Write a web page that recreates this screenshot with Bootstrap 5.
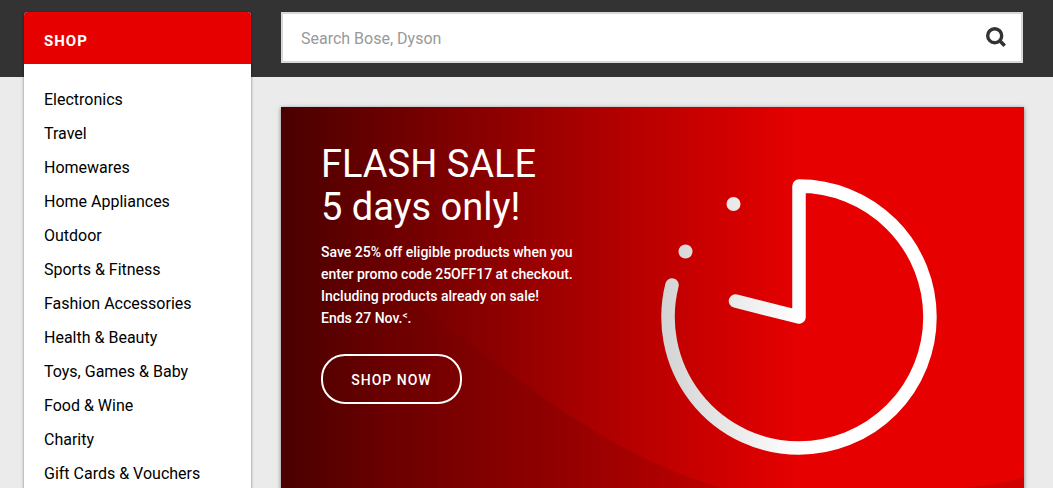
<!DOCTYPE html>
<html lang="en">
<head>
<meta charset="utf-8">
<meta name="viewport" content="width=device-width, initial-scale=1">
<title>Shop</title>
<link href="https://cdn.jsdelivr.net/npm/bootstrap@5.3.0/dist/css/bootstrap.min.css" rel="stylesheet">
<style>
  body {
    font-family: Roboto, "Liberation Sans", sans-serif;
    color: #000;
    background: linear-gradient(#333 77px, #ebebeb 77px) no-repeat #ebebeb;
  }
  .shop-page { gap: 30px; padding: 12px 29px 0 24px; }
  .shop-menu {
    width: 227px;
    border-radius: 4px 4px 0 0;
    box-shadow: 0 1px 3px rgba(0, 0, 0, .5);
  }
  .shop-title {
    height: 52px;
    padding: 6px 20px 0;
    font-size: 15px;
    letter-spacing: 1px;
    background: #e60000;
    border-radius: 4px 4px 0 0;
  }
  .shop-links { padding: 19px 20px 0; }
  .shop-links a {
    display: block;
    font-size: 16px;
    line-height: 34px;
    color: #000;
    text-decoration: none;
    white-space: nowrap;
  }
  .shop-search { height: 51px; margin-right: 1px; border: 2px solid #d8d8d8; }
  .shop-search input { padding: 2px 18px 0; font-size: 16px; color: #333; }
  .shop-search input::placeholder { color: #999; }
  .shop-search button { padding: 0 15px 2px; line-height: 1; }
  .promo {
    margin-top: 44px;
    padding: 36px 40px 40px;
    background: #e60000;
    box-shadow: 0 1px 4px rgba(0, 0, 0, .5);
  }
  .promo-art { inset: 0; }
  .promo h1 { margin: 0 0 12px; font-size: 38px; line-height: 43px; font-weight: 400; }
  .promo p { margin: 0 0 25px; font-size: 14px; line-height: 22px; font-weight: 500; }
  .promo-terms { color: inherit; text-decoration: none; font-size: 10px; vertical-align: 4px; line-height: 1; }
  .promo .shop-now {
    width: 141px;
    height: 50px;
    padding: 2px 0 0;
    font-size: 14px;
    font-weight: 500;
    letter-spacing: 1px;
    color: #fff;
    border: 2px solid #fff;
    border-radius: 24px;
  }
</style>
</head>
<body>
<div class="shop-page d-flex min-vh-100">
  <nav class="shop-menu flex-shrink-0 bg-white" aria-label="Shop categories">
    <h2 class="shop-title d-flex align-items-center m-0 fw-bold text-white">SHOP</h2>
    <ul class="shop-links list-unstyled m-0">
      <li><a href="#">Electronics</a></li>
      <li><a href="#">Travel</a></li>
      <li><a href="#">Homewares</a></li>
      <li><a href="#">Home Appliances</a></li>
      <li><a href="#">Outdoor</a></li>
      <li><a href="#">Sports &amp; Fitness</a></li>
      <li><a href="#">Fashion Accessories</a></li>
      <li><a href="#">Health &amp; Beauty</a></li>
      <li><a href="#">Toys, Games &amp; Baby</a></li>
      <li><a href="#">Food &amp; Wine</a></li>
      <li><a href="#">Charity</a></li>
      <li><a href="#">Gift Cards &amp; Vouchers</a></li>
    </ul>
  </nav>
  <main class="d-flex flex-column flex-grow-1">
    <form class="shop-search d-flex flex-shrink-0 bg-white" role="search">
      <input class="form-control border-0 rounded-0 shadow-none bg-transparent" type="search" placeholder="Search Bose, Dyson" aria-label="Search products">
      <button class="btn border-0" type="button" aria-label="Search">
        <svg width="20" height="20" viewBox="0 0 20 20" fill="none" stroke="#333" aria-hidden="true">
          <circle cx="8.7" cy="8.7" r="7" stroke-width="3.4"/>
          <path d="M13.500 13.500L18.700 18.700" stroke-width="3.6"/>
        </svg>
      </button>
    </form>
    <section class="promo position-relative flex-grow-1 text-white">
      <svg class="promo-art position-absolute w-100 h-100" viewBox="0 0 743 384" preserveAspectRatio="xMaxYMin slice" aria-hidden="true">
        <defs>
          <linearGradient id="fade" x1="0" x2="520" y1="0" y2="0" gradientUnits="userSpaceOnUse">
            <stop offset="0" stop-opacity=".68"/>
            <stop offset=".58" stop-opacity=".27"/>
            <stop offset="1" stop-opacity="0"/>
          </linearGradient>
          <linearGradient id="shade" x1="90" x2="280" y1="0" y2="0" gradientUnits="userSpaceOnUse">
            <stop offset="0" stop-opacity="0"/>
            <stop offset="1" stop-opacity=".09"/>
          </linearGradient>
        </defs>
        <path d="M0 110Q85 161 169 223C215 254 250 284 299 315Q375 363 442 381V384H0ZM743 370Q720 377 685 381V384H743Z" fill="url(#shade)"/>
        <path d="M454.500 194L518 210V79A131 131 0 0 1 518 341A131 131 0 0 1 391 178" fill="none" stroke="#fff" stroke-width="13.500" stroke-linecap="round" stroke-linejoin="round"/>
        <circle cx="452.500" cy="97" r="7" fill="#fff"/>
        <circle cx="404.500" cy="144.500" r="7" fill="#fff"/>
        <path d="M0 0H520V384H0Z" fill="url(#fade)"/>
      </svg>
      <div class="position-relative">
        <h1>FLASH SALE<br>5 days only!</h1>
        <p>Save 25% off eligible products when you<br>enter promo code 25OFF17 at checkout.<br>Including products already on sale!<br>Ends 27 Nov.<a class="promo-terms" href="#">&lt;</a>.</p>
        <button class="shop-now btn" type="button">SHOP NOW</button>
      </div>
    </section>
  </main>
</div>
<script src="https://cdn.jsdelivr.net/npm/bootstrap@5.3.0/dist/js/bootstrap.bundle.min.js"></script>
</body>
</html>
